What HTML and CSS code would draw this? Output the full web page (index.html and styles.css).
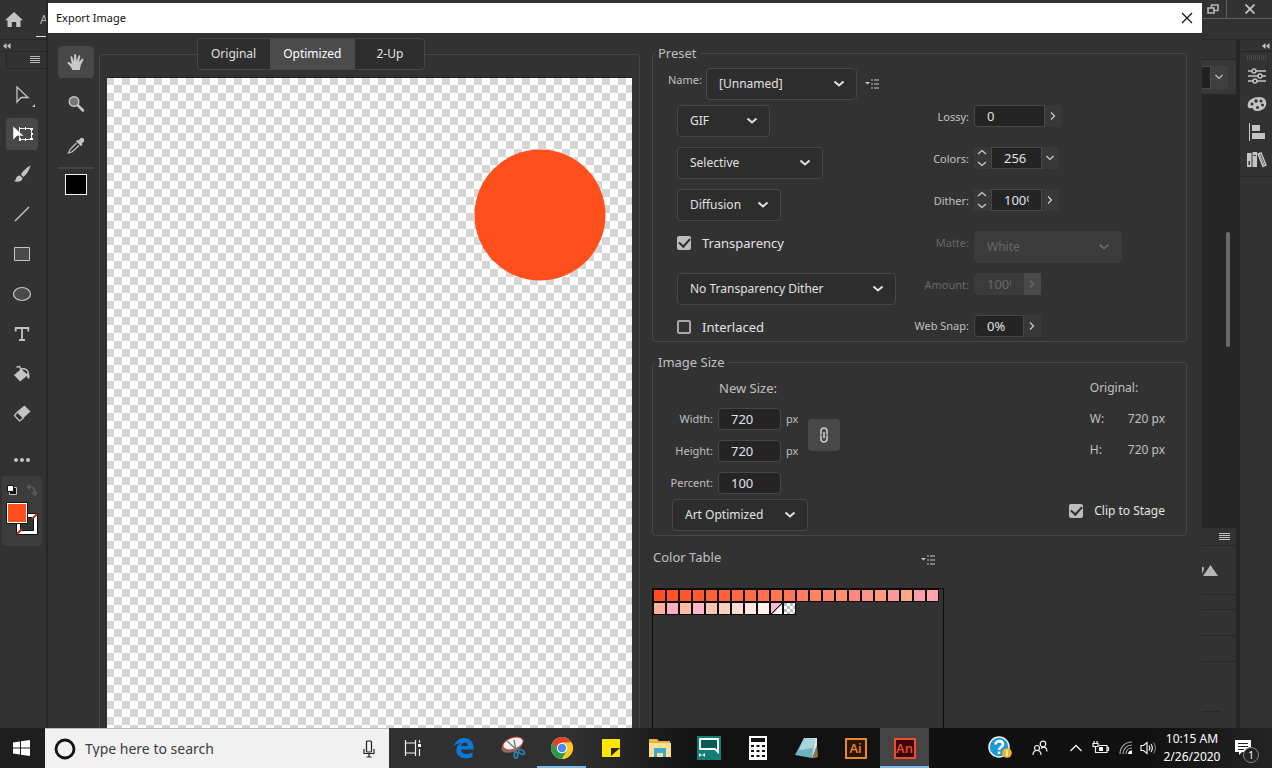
FILE: index.html
```html
<!DOCTYPE html>
<html lang="en">
<head>
<meta charset="utf-8">
<title>Export Image</title>
<link rel="stylesheet" href="styles.css">
</head>
<body>
<main class="workspace">
  <aside class="rail">
    <div class="rail-home">
      <button class="plain" aria-label="Home"><svg width="18" height="16" viewBox="0 0 18 16"><path fill="#c4c4c4" d="M9 0 0 8.2h2.5V15h4.3v-5h4.4v5h4.300V8.200H18z"/></svg></button>
      <span class="doc-tab">A</span>
    </div>
    <div class="rail-collapse"><svg width="8" height="6" viewBox="0 0 8 6"><path fill="#c4c4c4" d="M3.500 0v6L0 3zM7.500 0v6L4 3z"/></svg></div>
    <div class="rail-menu"><svg width="10" height="8" viewBox="0 0 10 8"><path stroke="#b5b5b5" d="M0 .5h10M0 2.500h10M0 4.500h10M0 6.500h10"/></svg></div>
    <nav class="tools">
      <button class="tool" aria-label="Selection"><svg width="28" height="28" viewBox="0 0 28 28"><path fill="none" stroke="#c4c4c4" stroke-width="1.300" d="M9 7v15l4-4.500h7z"/><path fill="#c4c4c4" d="M27 24v3h-3z"/></svg></button>
      <button class="tool active" aria-label="Free transform"><svg width="28" height="28" viewBox="0 0 28 28"><path fill="none" stroke="#f4f4f4" d="M11.500 8.500h12v11h-12z"/><path fill="#fff" d="M11 7h1v3h-1zM17 7h1v3h-1zM22 8h3v2h-3zM11 18h2v3h-2zM17 18h1v3h-1zM22 18h3v2h-3zM23 13h2v2h-2z"/><path fill="#fff" stroke="#484848" stroke-width=".5" d="M5 6v14l4-4h7z"/></svg></button>
      <button class="tool" aria-label="Brush"><svg width="28" height="28" viewBox="0 0 28 28"><path fill="#c4c4c4" d="M22.500 5.500c-4 2-8 6-9.500 9l2.500 2.500c3-2.500 6-7 7-11.500zM12 15.500c-2 0-3.500 1-4 3-.3 1.500-1 2.300-2 2.800 3 1 8.500.500 8.500-3.300z"/></svg></button>
      <button class="tool" aria-label="Line"><svg width="28" height="28" viewBox="0 0 28 28"><path stroke="#c4c4c4" stroke-width="1.500" d="m7 21 14-14"/></svg></button>
      <button class="tool" aria-label="Rectangle"><svg width="28" height="28" viewBox="0 0 28 28"><path fill="#4a4a4a" stroke="#c4c4c4" d="M6.500 7.500h15v13h-15z"/></svg></button>
      <button class="tool" aria-label="Ellipse"><svg width="28" height="28" viewBox="0 0 28 28"><ellipse cx="14" cy="14" rx="8.500" ry="6.500" fill="#4a4a4a" stroke="#c4c4c4" stroke-width="1.200"/></svg></button>
      <button class="tool" aria-label="Text"><svg width="28" height="28" viewBox="0 0 28 28"><path fill="none" stroke="#c4c4c4" stroke-width="1.800" d="M7.700 11.500V8h12.600v3.500M14 8v12M11 20h6"/></svg></button>
      <button class="tool" aria-label="Paint bucket"><svg width="28" height="28" viewBox="0 0 28 28"><path fill="#c4c4c4" d="m13 9 7 6-8 6.500L6 15z"/><path fill="none" stroke="#c4c4c4" stroke-width="1.500" d="m8.500 7 3-.5 3 6M13 9c4-1 7.500 1 7.500 5"/><path fill="#c4c4c4" d="M19 13c3-1 3 5 2 5.500-2 .5-2-2-2-5.500z"/></svg></button>
      <button class="tool" aria-label="Eraser"><svg width="28" height="28" viewBox="0 0 28 28"><path fill="#c4c4c4" d="m16.500 5.500 6 6-7.500 7-6.500-6.500z"/><path fill="none" stroke="#c4c4c4" stroke-width="1.300" d="m9 12.500-2.500 3 5 5.500 4-3"/></svg></button>
      <button class="tool more" aria-label="More tools"><svg width="18" height="4" viewBox="0 0 18 4"><g fill="#c4c4c4"><circle cx="3" cy="2" r="2"/><circle cx="9" cy="2" r="2"/><circle cx="15" cy="2" r="2"/></g></svg></button>
    </nav>
    <div class="paint"><svg width="40" height="70" viewBox="0 0 40 70">
      <path fill="#111" stroke="#c4c4c4" d="M7.500 11.500h7v7h-7z"/><path fill="#fff" stroke="#111" d="M5.500 9.500h6v6h-6z"/>
      <path fill="none" stroke="#5b5b5b" stroke-width="1.600" d="M26 11c5-1 7 2 7 7m-3-2 3 3 2-3"/><path fill="#5b5b5b" d="m28 8-4 3 4 3z"/>
      <path fill="#fff" stroke="#111" d="M14.500 37.500h21v21h-21z"/><path fill="#333" stroke="#111" d="M18.500 41.500h13v13h-13z"/><path stroke="#d3222a" stroke-width="2" d="m15 58 5-5M30 43l5-5"/>
      <path fill="#fff" stroke="#111" d="M4.500 26.500h21v21h-21z"/><path fill="#ff4f1c" d="M6 28h18v18H6z"/></svg></div>
  </aside>

  <section class="dialog" aria-label="Export Image">
    <header class="titlebar">
      <h1>Export Image</h1>
      <button class="plain" aria-label="Close"><svg width="12" height="12" viewBox="0 0 12 12"><path stroke="#111" stroke-width="1.200" d="m1 1 10 10M11 1 1 11"/></svg></button>
    </header>
    <div class="dialog-body">
      <nav class="dtools">
        <button class="dtool active" aria-label="Hand"><svg width="20" height="20" viewBox="0 0 20 20"><path fill="#c9c9c9" d="M6.500 18c-1-2.500-3-5-4.800-6.500-.8-.8.500-1.800 1.500-1.200l2.600 1.700L4.500 5.500c-.2-1.300 1.400-1.600 1.800-.4L8 9.500 8.200 3c.1-1.300 1.700-1.300 1.900 0L10.600 9l1.900-5c.4-1.200 2-.8 1.700.5L13 9.900l2.700-3c.8-1 2.200-.1 1.600 1L14.800 13l-1 5z"/></svg></button>
        <button class="dtool" aria-label="Zoom"><svg width="20" height="20" viewBox="0 0 20 20"><circle cx="8" cy="7.500" r="4.800" fill="#777" stroke="#c4c4c4" stroke-width="1.400"/><path stroke="#c4c4c4" stroke-width="2.600" stroke-linecap="round" d="m12 11.500 5 5"/></svg></button>
        <button class="dtool" aria-label="Eyedropper"><svg width="20" height="20" viewBox="0 0 20 20"><path fill="#c4c4c4" d="M17.500 2.500c-1.600-1.600-3.500 0-5 2l-1-.8-1.500 1.500 5 5 1.500-1.500-.8-1c2-1.500 3.400-3.600 1.800-5.200z"/><path fill="none" stroke="#c4c4c4" stroke-width="1.200" d="M10.500 7 4 13.500 2.500 17l3.700-1.300L13 9.500"/></svg></button>
        <hr>
        <button class="swatch-black" aria-label="Eyedropper color"></button>
      </nav>

      <div class="preview">
        <div class="tabs">
          <button>Original</button><button class="on">Optimized</button><button>2-Up</button>
        </div>
        <div class="canvas"><svg class="art" width="132" height="132" viewBox="0 0 132 132"><circle cx="66" cy="66" r="65.500" fill="#ff4f1c"/></svg></div>
      </div>

      <div class="settings">
        <fieldset class="group preset">
          <legend>Preset</legend>
          <div class="name-row">
            <label for="name">Name:</label>
            <span class="select w-name"><select id="name"><option>[Unnamed]</option></select><svg width="12" height="8" viewBox="0 0 12 8"><path d="m1.500 1.500 4.500 4 4.500-4"/></svg></span>
            <button class="plain list" aria-label="Preset menu"><svg width="14" height="10" viewBox="0 0 14 10"><path fill="#c4c4c4" d="M0 3h5L2.500 5.500z"/><path stroke="#c4c4c4" stroke-width="1.200" d="M6 1h2M6 5h2M6 9h2M9 1h5M9 5h5M9 9h5"/></svg></button>
          </div>
          <div class="preset-grid">
            <div class="cell"><span class="select w-gif"><select aria-label="Format"><option>GIF</option></select><svg width="12" height="8" viewBox="0 0 12 8"><path d="m1.500 1.500 4.500 4 4.500-4"/></svg></span></div>
            <label class="lab" for="lossy">Lossy:</label>
            <div class="num"><input id="lossy" class="n-wide" value="0"><button class="step" aria-label="Lossy slider"><svg width="6" height="8" viewBox="0 0 6 8"><path d="m1 .5 3.500 3.500L1 7.500"/></svg></button></div>

            <div class="cell"><span class="select w-sel"><select aria-label="Reduction"><option>Selective</option></select><svg width="12" height="8" viewBox="0 0 12 8"><path d="m1.500 1.500 4.500 4 4.500-4"/></svg></span></div>
            <label class="lab" for="colors">Colors:</label>
            <div class="num"><button class="step" aria-label="Step colors"><svg width="10" height="16" viewBox="0 0 10 16"><path d="m1 4 4-3.500L9 4M1 12l4 3.500L9 12"/></svg></button><input id="colors" class="n-mid" value="256"><button class="step" aria-label="Colors list"><svg width="8" height="6" viewBox="0 0 8 6"><path d="M.5 1 4 4.500 7.500 1"/></svg></button></div>

            <div class="cell"><span class="select w-dif"><select aria-label="Dither method"><option>Diffusion</option></select><svg width="12" height="8" viewBox="0 0 12 8"><path d="m1.500 1.500 4.500 4 4.500-4"/></svg></span></div>
            <label class="lab" for="dither">Dither:</label>
            <div class="num"><button class="step" aria-label="Step dither"><svg width="10" height="16" viewBox="0 0 10 16"><path d="m1 4 4-3.500L9 4M1 12l4 3.500L9 12"/></svg></button><input id="dither" class="n-mid" value="100%"><button class="step" aria-label="Dither slider"><svg width="6" height="8" viewBox="0 0 6 8"><path d="m1 .5 3.500 3.500L1 7.500"/></svg></button></div>

            <div class="cell up"><label class="check"><input type="checkbox" checked>Transparency</label></div>
            <label class="lab dim" for="matte">Matte:</label>
            <div class="num flat"><span class="select w-matte off"><select id="matte" disabled><option>White</option></select><svg width="12" height="8" viewBox="0 0 12 8"><path d="m1.500 1.500 4.500 4 4.500-4"/></svg></span></div>

            <div class="cell"><span class="select w-ntd"><select aria-label="Transparency dither"><option>No Transparency Dither</option></select><svg width="12" height="8" viewBox="0 0 12 8"><path d="m1.500 1.500 4.500 4 4.500-4"/></svg></span></div>
            <label class="lab dim" for="amount">Amount:</label>
            <div class="num off"><input id="amount" class="n-small" value="100%" disabled><button class="step" disabled aria-label="Amount slider"><svg width="6" height="8" viewBox="0 0 6 8"><path d="m1 .5 3.500 3.500L1 7.500"/></svg></button></div>

            <div class="cell last"><label class="check"><input type="checkbox">Interlaced</label></div>
            <label class="lab last" for="snap">Web Snap:</label>
            <div class="num last"><input id="snap" class="n-small" value="0%"><button class="step" aria-label="Web snap slider"><svg width="6" height="8" viewBox="0 0 6 8"><path d="m1 .5 3.500 3.500L1 7.500"/></svg></button></div>
          </div>
        </fieldset>

        <fieldset class="group size">
          <legend>Image Size</legend>
          <div class="size-left">
            <p class="new-size">New Size:</p>
            <div class="dims">
              <label for="w">Width:</label><input id="w" value="720"><span>px</span>
              <label for="h">Height:</label><input id="h" value="720"><span>px</span>
              <label for="p">Percent:</label><input id="p" value="100"><span></span>
            </div>
            <span class="select w-art"><select aria-label="Quality"><option>Art Optimized</option></select><svg width="12" height="8" viewBox="0 0 12 8"><path d="m1.500 1.500 4.500 4 4.500-4"/></svg></span>
          </div>
          <button class="link" aria-label="Constrain proportions"><svg width="10" height="16" viewBox="0 0 10 16"><g fill="none" stroke="#c9c9c9" stroke-width="1.600"><path d="M2.500 7H2V4a3 3 0 0 1 6 0v3h-.5M2.500 9H2v3a3 3 0 0 0 6 0V9h-.5M5 5v6"/></g></svg></button>
          <div class="size-right">
            <dl><dt class="wide">Original:</dt><dt>W:</dt><dd>720 px</dd><dt>H:</dt><dd>720 px</dd></dl>
            <label class="check small"><input type="checkbox" checked>Clip to Stage</label>
          </div>
        </fieldset>

        <div class="table-head"><h2>Color Table</h2><button class="plain" aria-label="Color table menu"><svg width="14" height="10" viewBox="0 0 14 10"><path fill="#c4c4c4" d="M0 3h5L2.500 5.500z"/><path stroke="#c4c4c4" stroke-width="1.200" d="M6 1h2M6 5h2M6 9h2M9 1h5M9 5h5M9 9h5"/></svg></button></div>
        <div class="color-table">
          <i style="background:#ff4f1c"></i><i style="background:#ff5325"></i><i style="background:#ff572b"></i><i style="background:#ff5a2f"></i><i style="background:#ff5f37"></i><i style="background:#ff633c"></i><i style="background:#ff6842"></i><i style="background:#ff6c47"></i><i style="background:#ff704f"></i><i style="background:#ff7850"></i><i style="background:#ff765b"></i><i style="background:#ff7c66"></i><i style="background:#ff855f"></i><i style="background:#ff8371"></i><i style="background:#ff8f6d"></i><i style="background:#ff8980"></i><i style="background:#ff918b"></i><i style="background:#ff9b7c"></i><i style="background:#ff9999"></i><i style="background:#ffa587"></i><i style="background:#ff9fa5"></i><i style="background:#ffa5ad"></i>
          <i style="background:#ffaf9d"></i><i style="background:#ffafc2"></i><i style="background:#ffbba8"></i><i style="background:#ffb5ca"></i><i style="background:#ffc4b5"></i><i style="background:#ffcfc2"></i><i style="background:#ffddd5"></i><i style="background:#ffeae3"></i><i style="background:#fff4ef"></i><i class="split"></i><i class="clear"></i>
        </div>
      </div>
    </div>
  </section>

  <aside class="right">
    <div class="win">
      <button class="plain" aria-label="Restore"><svg width="12" height="10" viewBox="0 0 12 10"><path fill="none" stroke="#b8b8b8" stroke-width="1.600" d="M1 4h6v5H1zM4.500 4V1H11v5.500H7"/></svg></button>
      <button class="plain x" aria-label="Close window"><svg width="10" height="10" viewBox="0 0 10 10"><path stroke="#c4c4c4" stroke-width="1.800" d="m.5.5 9 9M9.500.5l-9 9"/></svg></button>
    </div>
    <div class="panels">
      <div class="under">
        <div class="u-head"></div>
        <div class="u-field"><span></span><button class="plain" aria-label="Zoom list"><svg width="8" height="6" viewBox="0 0 8 6"><path fill="none" stroke="#c4c4c4" stroke-width="1.200" d="M.5 1 4 4.500 7.500 1"/></svg></button></div>
        <div class="stage"><div class="thumb"></div></div>
        <div class="u-menu"><svg width="11" height="8" viewBox="0 0 11 8"><path stroke="#c4c4c4" d="M0 .5h11M0 2.500h11M0 4.500h11M0 6.500h11"/></svg></div>
        <div class="u-mount"><svg width="17" height="12" viewBox="0 0 17 12"><path fill="#b5b5b5" d="M1 12 8.500 1 16 12zM0 3c1-.5 2 0 2 2L0 10z"/></svg></div>
        <div class="u-row a"></div><div class="u-row b"></div><div class="u-row b"></div><div class="u-row c"></div>
      </div>
      <div class="dock">
        <div class="rail-collapse end"><svg width="8" height="6" viewBox="0 0 8 6"><path fill="#c4c4c4" d="M3.500 0v6L0 3zM7.500 0v6L4 3z"/></svg></div>
        <div class="dock-icons">
          <div class="grip"></div>
          <button class="plain" aria-label="Properties"><svg width="20" height="16" viewBox="0 0 20 16"><g fill="#333" stroke="#c4c4c4" stroke-width="1.400"><path d="M1 3h18M1 8h18M1 13h18"/><circle cx="7" cy="3" r="2"/><circle cx="13" cy="8" r="2"/><circle cx="8" cy="13" r="2"/></g></svg></button>
          <button class="plain" aria-label="Color"><svg width="20" height="16" viewBox="0 0 20 16"><path fill="#c4c4c4" d="M1 11C-1 5 6 1 12 1s8 4 7 8-5 6-10 6c-3 0-2-3-4-3-1 0-3 1-4-1z"/><g fill="#333"><circle cx="5" cy="8" r="1.500"/><circle cx="9" cy="5" r="1.700"/><circle cx="14" cy="5" r="1.500"/><circle cx="15.500" cy="9" r="1.500"/><circle cx="10.500" cy="11.500" r="1.500"/></g></svg></button>
          <button class="plain" aria-label="Align"><svg width="20" height="18" viewBox="0 0 20 18"><path fill="#c4c4c4" d="M2 0h1v18H2zM5 2h8v6H5zM5 10h13v6H5z"/></svg></button>
          <button class="plain" aria-label="Library"><svg width="20" height="16" viewBox="0 0 20 16"><path fill="#c4c4c4" d="M0 1h4.500v14H0zM5.500 0H10v15H5.500z"/><path fill="#333" d="M1.500 9H3v4H1.500zM6.500 3H9v1H6.500z"/><path fill="none" stroke="#c4c4c4" stroke-width="1.500" d="m11 2 3-1 5 12-3 1.500z"/><path stroke="#c4c4c4" d="m12.500 2 5 12"/></svg></button>
        </div>
      </div>
    </div>
  </aside>
</main>

<footer class="taskbar">
  <button class="start" aria-label="Start"><svg width="17" height="16" viewBox="0 0 17 16"><path fill="#fff" d="M0 2.500 7 1.500v6H0zM8 1.300 17 0v7.500H8zM0 8.500h7v6L0 13.500zM8 8.500h9V16l-9-1.300z"/></svg></button>
  <div class="search">
    <svg width="22" height="22" viewBox="0 0 22 22"><circle cx="11" cy="11" r="9" fill="none" stroke="#111" stroke-width="2.800"/></svg>
    <input type="text" aria-label="Search" placeholder="Type here to search">
    <svg width="12" height="18" viewBox="0 0 12 18"><g fill="none" stroke="#222" stroke-width="1.200"><rect x="3.500" y="1" width="5" height="11" rx="1"/><path d="M1 9v4.500h10V9M6 13.500V17M3.500 17h5"/></g></svg>
  </div>
  <nav class="apps">
    <button class="view" aria-label="Task view"><svg width="18" height="16" viewBox="0 0 18 16"><g fill="none" stroke="#f0f0f0" stroke-width="1.200"><path d="M1.500 0v3h10V0M1.500 16v-3h10v3M1.500 3v10M11.500 3v10M15.500 0v3M15.500 9v7"/></g><path fill="#fff" d="M14 4h3v3h-3z"/></svg></button>
    <button aria-label="Edge"><svg width="22" height="22" viewBox="0 0 22 22"><path fill="#0a79d8" d="M1 9.500C2 4 6.500 1 11 1c6 0 9.500 4.500 9.500 9v2.500H8c.3 3 2.500 4.500 5.500 4.500 2.300 0 4.300-.6 6-1.500v4.200c-2 1-4.500 1.500-7 1.500C7 21.200 3 17.700 3.300 13c.1-3.300 2-5.700 5-7C4.500 6.300 2.500 7.500 1 9.500zM8.200 9h6.500c0-2-1-3.500-3-3.500S8.600 7 8.200 9z"/></svg></button>
    <button aria-label="Snipping tool"><svg width="26" height="24" viewBox="0 0 26 24"><ellipse cx="12" cy="10" rx="11" ry="6" transform="rotate(-20 12 10)" fill="#8d6a6a"/><ellipse cx="13" cy="7.500" rx="10.500" ry="5.800" transform="rotate(-18 13 7.500)" fill="#f3f3f3" stroke="#c33d3d"/><path stroke="#777" stroke-width="1.300" d="m7 5 10 9M14 4l2 10"/><g fill="none" stroke="#2d81a8" stroke-width="1.800"><ellipse cx="16" cy="19" rx="1.800" ry="3.200"/><ellipse cx="21.500" cy="16" rx="3.200" ry="1.900" transform="rotate(25 21.500 16)"/></g></svg></button>
    <button class="running" aria-label="Chrome"><svg width="22" height="22" viewBox="0 0 22 22"><circle cx="11" cy="11" r="11" fill="#fbc91c"/><path fill="#e14232" d="M11 5.500h9.500A11 11 0 0 0 1.500 5.500L6 13.500z"/><path fill="#269b53" d="M1.500 5.500A11 11 0 0 0 11 22l4.800-8.200L6.200 13.700z"/><path fill="#fbc91c" d="M11 22a11 11 0 0 0 9.500-16.500H11l4.800 8.200z"/><circle cx="11" cy="11" r="5.200" fill="#fff"/><circle cx="11" cy="11" r="4.200" fill="#4a8af4"/></svg></button>
    <button aria-label="Sticky notes"><svg width="18" height="18" viewBox="0 0 18 18"><path fill="#ffe500" d="M0 0h18v18H0z"/><path fill="#2b2820" d="M9 9h9l-9 8z"/></svg></button>
    <button aria-label="File Explorer"><svg width="22" height="20" viewBox="0 0 22 20"><path fill="#e5ae3f" d="M0 1h8l2 2h11v4H0z"/><path fill="#fbe092" d="M0 5h22v14H0z"/><path fill="#3fa7d6" d="M5 10h12v9h-3v-4H8v4H5z"/><path fill="#f5c955" d="M2 2h5v1H2z"/></svg></button>
    <button aria-label="Screen recorder"><svg width="24" height="24" viewBox="0 0 24 24"><path fill="#157c76" d="M0 0h24v24H0z"/><path fill="#0a5b58" d="M4 4h17v10H4z"/><path fill="none" stroke="#fff" stroke-width="1.800" d="M3 3h18v13l-3-3H3z"/><path fill="#d7f2ee" d="m2 17 3 2 3-2v4l-3-2-3 2z"/></svg></button>
    <button aria-label="Calculator"><svg width="18" height="24" viewBox="0 0 18 24"><path fill="#fff" d="M0 0h18v24H0z"/><path fill="#111" d="M2 2h14v4H2zM2 9h3v2H2zM7.500 9h3v2h-3zM13 9h3v2h-3zM2 14h3v2H2zM7.500 14h3v2h-3zM13 14h3v2h-3zM2 19h3v2H2zM7.500 19h3v2h-3zM13 19h3v2h-3z"/></svg></button>
    <button aria-label="Notepad"><svg width="24" height="22" viewBox="0 0 24 22"><path fill="#d7e6e9" d="M10 1h12v19l-5 1z"/><path fill="#6eb3c0" d="M9 1 20 2 17 21 0 18z"/><path fill="#a7d5dc" d="m9 1 11 1-2 9L4 13z"/><path fill="#8b7547" d="m22 8 1 12-6 1z"/></svg></button>
    <button aria-label="Illustrator"><span class="adobe ai">Ai</span></button>
    <button class="running current" aria-label="Animate"><span class="adobe an">An</span></button>
  </nav>
  <div class="tray">
    <svg class="help" width="24" height="24" viewBox="0 0 24 24"><circle cx="11" cy="11" r="10" fill="#1b9ad6" stroke="#e8f6fb" stroke-width="1.500"/><path fill="none" stroke="#fff" stroke-width="2.600" d="M7.500 8.500c0-4.500 7.500-4.500 7.500 0 0 2.500-4 2.500-4 5.500M11 15.500v2.500"/><circle cx="19" cy="17" r="4.800" fill="#f4b42a"/><path stroke="#fff" stroke-width="1.400" d="M19 14v1.500M19 16.300V20"/></svg>
    <svg class="people" width="16" height="16" viewBox="0 0 16 16"><g fill="none" stroke="#f0f0f0" stroke-width="1.200"><circle cx="5" cy="8" r="2.500"/><circle cx="11" cy="4" r="2.800"/><path d="M1 15c0-6 8-6 8 0M9 8.500c3-3 6-1 6 3"/></g></svg>
    <svg class="up-arrow" width="14" height="8" viewBox="0 0 14 8"><path fill="none" stroke="#f0f0f0" stroke-width="1.300" d="m1.500 7 5.500-5.500L12.500 7"/></svg>
    <svg class="battery" width="18" height="14" viewBox="0 0 18 14"><g fill="none" stroke="#f0f0f0" stroke-width="1.200"><path d="M6 11.500h9v-7H7M15 6.500h1.500v3H15M2 0v2M5 0v2M1 2.500h5v3H1zM3.500 5.500v6H6"/></g><path fill="#fff" d="M7 6h4v4H7z"/></svg>
    <svg class="wifi" width="14" height="14" viewBox="0 0 14 14"><g fill="none" stroke="#aaa" stroke-width="1.200"><path d="M1 13C1 6 6 1 13 1M4 13c0-5 4-9 9-9M7 13c0-3.500 2.500-6 6-6"/></g><path fill="#fff" d="M9 13c0-2 2-4 4-3.500V13z"/></svg>
    <svg class="sound" width="17" height="14" viewBox="0 0 17 14"><g fill="none" stroke="#f0f0f0" stroke-width="1.200"><path d="M1 4.500h2.500L7 1.500v11l-3.500-3H1zM9 4.500c1 1.500 1 3.500 0 5M11 3c1.700 2.500 1.700 5.500 0 8"/><path stroke="#777" d="M13.500 1.500c2.500 3.500 2.500 7.500 0 11"/></g></svg>
    <div class="clock"><time>10:15 AM</time><time>2/26/2020</time></div>
    <div class="notice"><svg width="18" height="17" viewBox="0 0 18 17"><path fill="#fff" d="M0 0h16v12H7l-3 3v-3H0z"/><path stroke="#222" d="M3 3.500h10M3 6.500h10M3 9.500h6"/></svg><span class="badge">1</span></div>
  </div>
</footer>
</body>
</html>
```
FILE: styles.css
```css
* { box-sizing: border-box; }
body {
  margin: 0; height: 100vh; overflow: hidden; display: flex; flex-direction: column;
  background: #323232; color: #e2e2e2;
  font: 13px/16px "Noto Sans", "Open Sans", sans-serif;
}
button, input, select { font: inherit; color: inherit; margin: 0; }
button { border: 0; padding: 0; background: none; display: flex; align-items: center; justify-content: center; }
svg { display: block; flex: none; }
h1, h2, p, dl, dd { margin: 0; font-weight: 400; }

.workspace { flex: 1; min-height: 0; display: grid; grid-template-columns: 48px minmax(0, 1fr) 70px; }

/* left tool rail */
.rail { overflow: hidden; border-right: 2px solid #262626; }
.rail-home { height: 40px; display: flex; align-items: center; padding-left: 5px; gap: 13px; border-bottom: 1px solid #262626; }
.doc-tab { align-self: stretch; padding-top: 12px; width: 12px; margin-bottom: 2px; padding-left: 4px; border-bottom: 1px solid #ddd; color: #b5b5b5; font-size: 12px; }
.rail-collapse { height: 12px; display: flex; align-items: center; padding-left: 3px; border-bottom: 1px solid #262626; }
.rail-collapse.end { justify-content: flex-end; padding-right: 2px; }
.rail-menu { height: 17px; margin-left: 6px; padding-right: 6px; display: flex; align-items: center; justify-content: flex-end; border-bottom: 1px solid #262626; border-left: 1px solid #262626; }
.tools { width: 44px; padding-top: 9px; display: flex; flex-direction: column; align-items: center; gap: 8px; }
.tool { width: 32px; height: 32px; border-radius: 4px; }
.tool.active, .dtool.active { background: #484848; }
.tool.more { margin-top: 6px; }
.paint { width: 40px; margin-left: 2px; background: #3c3c3c; border-radius: 4px; }

/* dialog */
.dialog { margin-top: 3px; display: flex; flex-direction: column; min-height: 0; background: #323232; }
.titlebar { height: 30px; background: #fff; color: #111; display: flex; align-items: center; justify-content: space-between; padding: 0 9px 0 8px; }
.titlebar h1 { font-size: 11px; }
.dialog-body { flex: 1; min-height: 0; overflow: hidden; display: grid; grid-template-columns: 51px minmax(0, 541px) minmax(0, 1fr); }
.dtools { padding: 13px 5px 0 10px; display: flex; flex-direction: column; align-items: center; gap: 10px; }
.dtool { width: 36px; height: 32px; border-radius: 4px; }
.dtools hr { width: 36px; height: 2px; margin: -5px 0; border: 0; background: #454545; }
.swatch-black { width: 22px; height: 21px; background: #000; border: 1px solid #f4f4f4; }

.preview { margin-top: 21px; border: 1px solid #474747; border-bottom: 0; border-radius: 4px 4px 0 0; padding: 0 7px; display: flex; flex-direction: column; }
.tabs { align-self: flex-start; flex: none; margin: -17px 0 7px 90px; height: 32px; display: flex; border: 1px solid #474747; border-radius: 4px; background: #2e2e2e; overflow: hidden; font-size: 12px; }
.tabs button { padding: 0 14px 0 13px; }
.tabs button:last-child { padding: 0 21px; }
.tabs .on { background: #4b4b4b; color: #fff; }
.canvas {
  flex: 1; position: relative; border: solid #1f1f1f; border-width: 1px 0 0;
  background: conic-gradient(#fff 25%, #d6d6d6 0 50%, #fff 0 75%, #d6d6d6 0) -1px -1px / 16px 16px;
}
.art { position: absolute; left: 367px; top: 71px; }

.settings { padding: 12px 15px 0 12px; display: flex; flex-direction: column; min-width: 0; }
.group { flex: none; margin: 0; min-width: 0; border: 1px solid #474747; border-radius: 4px; padding: 0; color: #c0c0c0; }
.group legend { margin-left: 2px; padding: 0 3px; font-size: 13px; }
.select { display: inline-grid; align-items: center; font-size: 12px; }
.select > * { grid-area: 1 / 1; }
.select svg { justify-self: end; margin-right: 12px; pointer-events: none; }
.select path { fill: none; stroke: #e2e2e2; stroke-width: 2; }
.select select { width: 100%; height: 32px; appearance: none; padding: 0 12px; background: #2d2d2d; border: 1px solid #474747; border-radius: 4px; color: #e2e2e2; }
.select.off select { background: #3b3b3b; border-color: #3b3b3b; color: #686868; opacity: 1; }
.select.off path { stroke: #686868; }
.w-name { width: 151px; } .w-gif { width: 93px; } .w-sel { width: 146px; } .w-dif { width: 104px; }
.w-ntd { width: 219px; } .w-matte { width: 148px; } .w-art { width: 136px; }

.name-row { display: flex; align-items: center; padding: 7px 0 0 15px; height: 39px; }
.name-row label { font-size: 11px; width: 38px; padding-bottom: 8px; }
.list { margin-left: 8px; }
.preset-grid { display: grid; grid-template-columns: 219px 73px 1fr; grid-template-rows: repeat(5, 42px) 31px; padding-left: 24px; column-gap: 0; }
.cell { display: flex; align-items: center; }
.cell.up { padding-bottom: 8px; }
.cell.last { padding-top: 2px; }
.lab { font-size: 11px; align-self: center; text-align: right; padding-bottom: 8px; white-space: nowrap; }
.lab.last { padding: 1px 0 0; }
.lab.dim { color: #686868; }
.num { display: flex; align-items: center; padding: 0 0 10px 5px; }
.num.flat { padding-bottom: 0; }
.num.last { padding-bottom: 0; }
.num input, .dims input { height: 22px; min-width: 0; background: #242424; border: 1px solid #474747; border-radius: 4px; padding: 0 12px; color: #e2e2e2; }
.n-wide { width: 71px; } .n-mid { width: 51px; } .n-small { width: 50px; }
.num .n-mid { border-radius: 0; }
.num .n-wide, .num .n-small { border-radius: 4px 0 0 4px; }
.step { width: 17px; height: 22px; background: #383838; padding-right: 2px; }
.step path { fill: none; stroke: #cfcfcf; stroke-width: 1.200; }
.num.off input { background: #3b3b3b; border-color: #3b3b3b; color: #686868; }
.num.off .step { background: #4a4a4a; }
.num.off .step path { stroke: #686868; }
.check { display: flex; align-items: center; gap: 11px; color: #e2e2e2; }
.check.small { font-size: 12px; }
.check input { appearance: none; width: 14px; height: 14px; border: 2px solid #a8a8a8; border-radius: 2px; display: grid; place-items: center; }
.check input:checked { background: #bdbdbd; border-color: #bdbdbd; }
.check input:checked::after { content: ""; width: 5px; height: 9px; margin-top: -3px; border: solid #2c2c2c; border-width: 0 2px 2px 0; transform: rotate(42deg); }

.size { margin-top: 12px; display: flex; align-items: flex-start; height: 182px; padding-right: 21px; }
.size-left { width: 136px; margin-left: 19px; flex: none; }
.size-left .select { margin-top: 5px; }
.new-size { margin: 10px 0 12px 47px; }
.dims { display: grid; grid-template-columns: 41px 63px auto; grid-auto-rows: 22px; gap: 10px 5px; align-items: center; font-size: 11px; justify-content: start; }
.dims label { text-align: right; white-space: nowrap; justify-self: end; }
.dims input { width: 63px; font-size: 13px; }
.link { width: 32px; height: 32px; border-radius: 4px; background: #484848; margin: 49px 0 0; flex: none; }
.size-right { margin-left: auto; padding-top: 10px; display: flex; flex-direction: column; align-items: flex-end; gap: 45px; }
dl { display: grid; grid-template-columns: 38px auto; row-gap: 15px; font-size: 12px; }
.wide { grid-column: 1 / 3; }

.table-head { width: 283px; max-width: 100%; display: flex; align-items: center; justify-content: space-between; margin-top: 13px; padding-left: 1px; color: #c0c0c0; }
.table-head h2 { font-size: 13px; }
.table-head button { padding-top: 6px; }
.color-table { flex: 1; margin-top: 23px; width: 292px; max-width: 100%; border: 1px solid #0c0c0c; border-bottom: 0; display: grid; grid-template-columns: repeat(22, 13px); grid-auto-rows: 13px; }
.color-table i { border: 1px solid #0c0c0c; }
.split { background: linear-gradient(135deg, #f7b9d4 46%, #111 47% 54%, #fff5ee 55%); }
.clear { background: conic-gradient(#fff 25%, #bbb 0 50%, #fff 0 75%, #bbb 0) 0 0 / 6px 6px; }

/* right side of the main window */
.right { display: flex; flex-direction: column; min-height: 0; overflow: hidden; }
.win { height: 40px; border-bottom: 1px solid #262626; display: flex; align-items: flex-start; }
.win button { height: 19px; width: 25px; padding-right: 3px; border-bottom: 1px solid #606060; border-right: 1px solid #606060; }
.win .x { flex: 1; border-right: 0; padding: 0; }
.panels { flex: 1; min-height: 0; display: grid; grid-template-columns: 34px 1fr; gap: 4px; background: #262626; }
.under, .dock { background: #323232; display: flex; flex-direction: column; }
.u-head { height: 20px; border-bottom: 1px solid #262626; }
.u-field { height: 34px; display: flex; align-items: center; background: #383838; }
.u-field span { width: 9px; height: 23px; background: #222; border: 1px solid #4a4a4a; border-left: 0; }
.u-field button { width: 17px; height: 23px; background: #3f3f3f; padding-right: 2px; }
.stage { height: 434px; background: #262626; padding: 138px 6px 0 0; }
.thumb { width: 4px; height: 115px; margin-left: auto; border-radius: 2px; background: #6b6b6b; }
.u-menu { height: 18px; padding-right: 6px; display: flex; align-items: center; justify-content: flex-end; border-bottom: 1px solid #262626; }
.u-mount { height: 49px; display: flex; align-items: center; border-bottom: 1px solid #262626; }
.u-row { border-bottom: 1px solid #262626; }
.a { height: 15px; } .b { height: 26px; } .c { height: 50px; margin-right: 16px; }
.dock-icons { padding: 3px 4px 2px 0; display: flex; flex-direction: column; align-items: center; border-bottom: 1px solid #262626; }
.dock-icons button { height: 28px; margin-left: 6px; }
.grip { width: 20px; height: 5px; margin: 0 0 2px 6px; background: repeating-linear-gradient(90deg, #4a4a4a 0 1px, #323232 1px 2px); }

/* taskbar */
.taskbar { height: 40px; flex: none; display: flex; background: linear-gradient(90deg, #1e1e1e 0 3%, #303030 31%, #303030 45%, #121212 55%, #101010 90%, #242424); color: #fff; }
.start { width: 45px; padding-right: 3px; }
.search { width: 344px; display: flex; align-items: center; background: #f1f1f1; border-top: 1px solid #bbb; padding: 0 14px 0 9px; color: #333; }
.search input { flex: 1; min-width: 0; border: 0; background: none; padding: 0 9px; font-size: 14px; outline: 0; }
.search input::placeholder { color: #3c3c3c; opacity: 1; }
.apps { display: flex; }
.apps button { width: 49px; height: 40px; }
.apps .view { width: 50px; padding-right: 2px; }
.running { box-shadow: inset 0 -2px #76b9ed; }
.current { background: #444; }
.adobe { width: 22px; height: 21px; border: 2px solid; font: 600 13px/17px "Open Sans", sans-serif; }
.ai { color: #e8872b; background: #2a1606; }
.an { color: #ef4b37; background: #3a0705; }
.tray { margin-left: auto; display: flex; align-items: center; padding-right: 10px; }
.people { margin-left: 20px; } .up-arrow { margin-left: 21px; } .battery { margin-left: 9px; }
.wifi { margin-left: 9px; } .sound { margin-left: 7px; }
.clock { width: 70px; margin-right: 8px; text-align: center; font-size: 12px; line-height: 18px; display: flex; flex-direction: column; }
.notice { position: relative; width: 27px; }
.badge { position: absolute; left: 8px; top: 7px; width: 16px; height: 16px; border: 1px solid #888; border-radius: 50%; background: #222; font-size: 10px; line-height: 14px; text-align: center; }
```
